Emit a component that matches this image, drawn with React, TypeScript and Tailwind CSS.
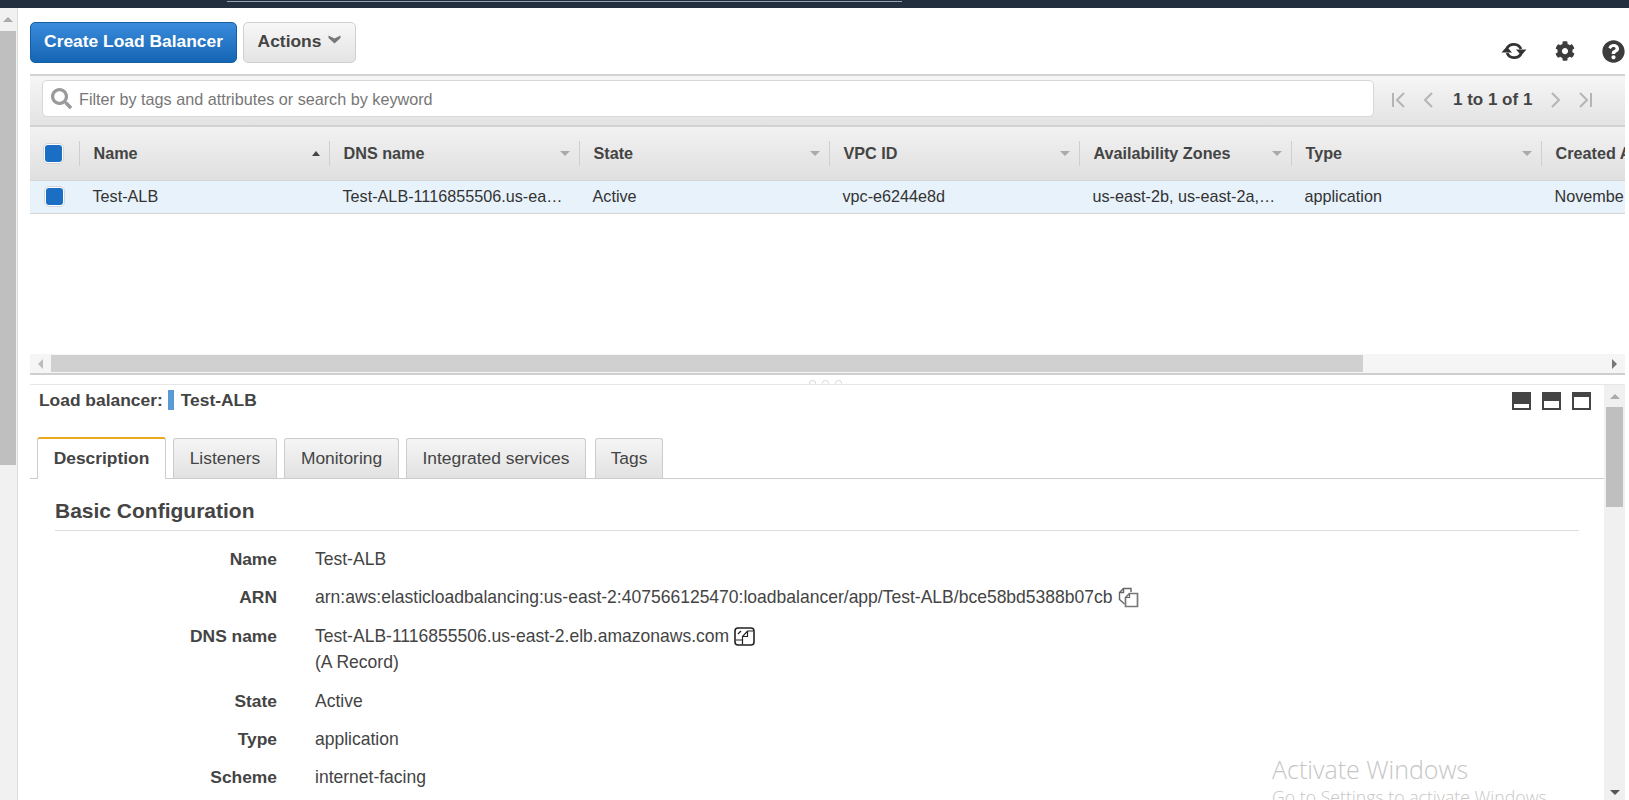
import React from "react";
import { FaCog, FaQuestionCircle, FaSearch } from "react-icons/fa";

const Checkbox = () => (
  <span className="flex h-[21px] w-[21px] items-center justify-center rounded-[5px] border border-[#d5d5d5] bg-white">
    <span className="h-[17px] w-[17px] rounded-[3px] bg-[#1a6fc4]" />
  </span>
);

const columns = [
  { name: "Name", width: "w-[250px]", value: "Test-ALB", sort: true },
  { name: "DNS name", width: "w-[250px]", value: "Test-ALB-1116855506.us-ea…" },
  { name: "State", width: "w-[250px]", value: "Active" },
  { name: "VPC ID", width: "w-[250px]", value: "vpc-e6244e8d" },
  { name: "Availability Zones", width: "w-[212px]", value: "us-east-2b, us-east-2a,…" },
  { name: "Type", width: "w-[250px]", value: "application" },
  { name: "Created A", width: "w-[83px]", value: "Novembe", last: true },
];

const HeaderCell = ({ col }: { col: (typeof columns)[number] }) => (
  <div className={`${col.width} flex h-full shrink-0 items-center py-[14px]`}>
    <div className={`flex h-full flex-1 items-center justify-between pl-[13.5px] pr-[9px] ${col.last ? "" : "border-r border-[#cfcfcf]"}`}>
      <span className="whitespace-nowrap">{col.name}</span>
      {!col.last &&
        (col.sort ? (
          <span className="h-0 w-0 border-x-[4px] border-b-[5px] border-x-transparent border-b-[#444]" />
        ) : (
          <span className="h-0 w-0 border-x-[5px] border-t-[5px] border-x-transparent border-t-[#aaa]" />
        ))}
    </div>
  </div>
);

const PanelIcon = ({ open }: { open: string }) => (
  <span className="flex h-[18px] w-[19px] items-end bg-[#444] px-[2px] pb-[2px]">
    <span className={`w-full bg-white ${open}`} />
  </span>
);

const Pager = ({ bar, flip }: { bar?: boolean; flip?: boolean }) => (
  <svg width="16" height="18" viewBox="0 0 16 18" fill="none" stroke="#b5b5b5" strokeWidth="2" className={flip ? "-scale-x-100" : ""}>
    {bar && <path d="M2 2v14" />}
    <path d={bar ? "M13 2L6 9l7 7" : "M12 2L5 9l7 7"} />
  </svg>
);

const CopyIcon = ({ dark }: { dark?: boolean }) =>
  dark ? (
    <svg width="21" height="19" viewBox="0 0 21 19" fill="none" stroke="#222" strokeWidth="1.6" className="ml-[5px]">
      <rect x="1" y="1" width="19" height="17" rx="3" />
      <path d="M4 7L7 4" strokeWidth="1.3" />
      <path d="M2 13H8.5V17.5" strokeWidth="1.2" />
      <path d="M8.5 13V9.5L13.5 4H19M8.5 9.5H13.5V4" strokeWidth="1.2" />
    </svg>
  ) : (
    <svg width="21" height="21" viewBox="0 0 21 21" fill="none" stroke="#666" strokeWidth="1.4" className="ml-[5px]">
      <path d="M13 5V1.5H5.5L1.5 5.5V12.5L6.5 17" />
      <path d="M5.5 1.5V5.5H1.5" />
      <path d="M11.5 6.5H19.5V19.5H7.5V10.5Z" strokeWidth="1.7" stroke="#777" />
      <path d="M11.5 6.5V10.5H7.5" strokeWidth="1.2" />
    </svg>
  );

const details = [
  { label: "Name", value: "Test-ALB" },
  { label: "ARN", value: "arn:aws:elasticloadbalancing:us-east-2:407566125470:loadbalancer/app/Test-ALB/bce58bd5388b07cb", copy: "light" },
  { label: "DNS name", value: "Test-ALB-1116855506.us-east-2.elb.amazonaws.com", copy: "dark", extra: "(A Record)" },
  { label: "State", value: "Active" },
  { label: "Type", value: "application" },
  { label: "Scheme", value: "internet-facing" },
];

const tabs = [
  { name: "Listeners", width: "w-[104px]" },
  { name: "Monitoring", width: "w-[115px]" },
  { name: "Integrated services", width: "w-[180px]" },
  { name: "Tags", width: "ml-[2px] w-[68px]" },
];

export default function App() {
  return (
    <div className="relative flex h-[800px] w-[1629px] flex-col overflow-hidden bg-white font-['Liberation_Sans',Arial,sans-serif] text-[17.4px] text-[#444]">
      <div className="relative h-[8px] shrink-0 bg-[#232f3e]">
        <div className="ml-[227px] h-[2px] w-[675px] border-b border-[#9aa3ad]" />
      </div>

      <div className="flex min-h-0 flex-1">
        {/* page scrollbar */}
        <div className="flex h-full w-[18px] shrink-0 flex-col border-r border-[#dcdcdc] bg-[#f1f1f1]">
          <div className="flex h-[23px] w-[16px] items-center justify-center">
            <span className="h-0 w-0 border-x-[5px] border-b-[5px] border-x-transparent border-b-[#aaa]" />
          </div>
          <div className="h-[434px] w-[16px] bg-[#bfbfbf]" />
        </div>

        <div className="flex min-w-0 flex-1 flex-col pl-[12px] pr-[4px]">
          {/* actions */}
          <div className="flex h-[66px] shrink-0 items-start justify-between pt-[14px]">
            <div className="flex gap-[6px]">
              <button className="h-[41px] w-[207px] rounded-[5px] border border-[#15609f] bg-gradient-to-b from-[#3a8bdc] to-[#1465b4] pb-[2px] font-bold text-white">
                Create Load Balancer
              </button>
              <button className="flex h-[41px] w-[113px] items-center justify-center gap-[7px] rounded-[5px] border border-[#cfcfcf] bg-gradient-to-b from-[#f7f7f7] to-[#e4e4e4] pb-[2px] font-bold">
                Actions
                <svg width="13" height="9" viewBox="0 0 13 9" fill="#777" className="mb-[4px]">
                  <path d="M0.5 0.5L6.5 3.5L12.5 0.5V3L6.5 8.5L0.5 3z" />
                </svg>
              </button>
            </div>
            <div className="mt-[17px] flex items-center text-[#3c3c3c]">
              <svg width="26" height="24" viewBox="0 0 26 24" fill="none" stroke="#333" strokeWidth="2.8" className="-ml-[1px]">
                <path d="M6 9a8 8 0 0 1 14 1" />
                <path d="M20 15a8 8 0 0 1-14-1" />
                <path d="M15 10.5h10.5l-5.25 6z" fill="#333" stroke="none" />
                <path d="M0.5 13.5h10.5l-5.25-6z" fill="#333" stroke="none" />
              </svg>
              <FaCog className="ml-[28px] text-[20px]" />
              <FaQuestionCircle className="ml-[27px] text-[23px]" />
            </div>
          </div>

          {/* filter bar */}
          <div className="flex h-[53px] shrink-0 items-center border-y-2 border-[#d2d2d2] bg-gradient-to-b from-[#f6f6f6] to-[#e3e3e3] pb-[4px] pl-[12px]">
            <div className="flex h-[37px] w-[1332px] items-center rounded-[5px] border border-[#d8d8d8] bg-white pl-[8px]">
              <FaSearch className="text-[21px] text-[#9a9a9a]" />
              <span className="ml-[7px] pt-[1px] text-[16.2px] text-[#777]">Filter by tags and attributes or search by keyword</span>
            </div>
            <div className="ml-[17px] mt-[2px] flex items-center">
              <Pager bar />
              <span className="ml-[13px]"><Pager /></span>
              <span className="ml-[17px] text-[17px] font-bold">1 to 1 of 1</span>
              <span className="ml-[16px]"><Pager flip /></span>
              <span className="ml-[13px]"><Pager bar flip /></span>
            </div>
          </div>

          {/* table */}
          <div className="flex h-[53px] shrink-0 items-center overflow-hidden bg-gradient-to-b from-[#f2f2f2] to-[#dfdfdf] text-[16.2px] font-bold">
            <div className="flex h-full w-[50px] shrink-0 items-center py-[14px]">
              <div className="flex h-full w-full items-center border-r border-[#cfcfcf] pl-[13px]">
                <Checkbox />
              </div>
            </div>
            {columns.map((col) => (
              <HeaderCell key={col.name} col={col} />
            ))}
          </div>
          <div className="flex h-[34px] shrink-0 items-center overflow-hidden border-y border-[#d5d5d5] bg-[#e8f2fb] pb-[1px] text-[16.2px] text-[#333]">
            <div className="flex w-[50px] shrink-0 pl-[14px]">
              <Checkbox />
            </div>
            {columns.map((col) => (
              <div key={col.name} className={`${col.width} shrink-0 overflow-hidden whitespace-nowrap pl-[12.5px]`}>
                {col.value}
              </div>
            ))}
          </div>

          <div className="h-[140px] shrink-0" />

          {/* table scrollbar */}
          <div className="flex h-[21px] shrink-0 items-center border-b-2 border-[#cfcfcf] bg-[#f5f5f5]">
            <div className="flex w-[21px] justify-center">
              <span className="h-0 w-0 border-y-[5px] border-r-[5px] border-y-transparent border-r-[#bbb]" />
            </div>
            <div className="h-[17px] w-[1312px] bg-[#d0d0d0]" />
            <div className="flex flex-1 justify-end pr-[8px]">
              <span className="h-0 w-0 border-y-[5px] border-l-[5px] border-y-transparent border-l-[#777]" />
            </div>
          </div>

          {/* splitter */}
          <div className="flex h-[9px] shrink-0 items-end justify-center gap-[6px] pr-[5px]">
            <span className="h-[4px] w-[7px] rounded-t-full border border-b-0 border-[#ddd]" />
            <span className="h-[4px] w-[7px] rounded-t-full border border-b-0 border-[#ddd]" />
            <span className="h-[4px] w-[7px] rounded-t-full border border-b-0 border-[#ddd]" />
          </div>

          {/* details panel */}
          <div className="flex min-h-0 flex-1 border-t border-[#e6e6e6]">
            <div className="min-w-0 flex-1">
              <div className="flex h-[52px] items-start justify-between pl-[9px] pr-[13px] pt-[5px]">
                <div className="flex h-[20px] items-center font-bold">
                  Load balancer:
                  <span className="ml-[5px] mr-[7px] h-[20px] w-[6px] bg-[#5a9bd5]" />
                  Test-ALB
                </div>
                <div className="mt-[2px] flex gap-[11px]">
                  <PanelIcon open="h-[4px]" />
                  <PanelIcon open="h-[7px]" />
                  <PanelIcon open="h-[11px]" />
                </div>
              </div>

              <div className="flex h-[42px] items-end border-b border-[#ccc] pl-[7px]">
                <div className="z-10 -mb-px flex h-[42px] w-[129px] items-center justify-center rounded-t-[3px] border border-b-0 border-[#ccc] border-t-[#eba91f] bg-white pb-[1px] font-bold [border-top-width:2px]">
                  Description
                </div>
                <div className="ml-[7px] flex gap-[7px]">
                  {tabs.map((tab) => (
                    <div
                      key={tab.name}
                      className={`${tab.width} flex h-[40px] items-center justify-center rounded-t-[3px] border border-b-0 border-[#ccc] bg-gradient-to-b from-[#f5f5f5] to-[#e2e2e2]`}
                    >
                      {tab.name}
                    </div>
                  ))}
                </div>
              </div>

              <div className="pl-[25px] pr-[25px] pt-[18px]">
                <h2 className="h-[34px] border-b border-[#ddd] text-[21px] font-bold leading-[28px]">Basic Configuration</h2>
                <div className="pt-[9px]">
                  {details.map((row) => (
                    <div key={row.label} className="flex py-[6px] leading-[26.4px]">
                      <div className="w-[222px] shrink-0 text-right font-bold">{row.label}</div>
                      <div className="ml-[38px] text-[17.52px]">
                        <div className="flex items-center">
                          {row.value}
                          {row.copy === "light" && <CopyIcon />}
                          {row.copy === "dark" && <CopyIcon dark />}
                        </div>
                        {row.extra && <div>{row.extra}</div>}
                      </div>
                    </div>
                  ))}
                </div>
              </div>
            </div>

            {/* panel scrollbar */}
            <div className="flex w-[21px] shrink-0 flex-col items-center justify-between bg-[#f0f0f0] pb-[5px]">
              <div className="flex w-full flex-col items-center">
                <div className="flex h-[22px] items-center">
                  <span className="h-0 w-0 border-x-[5px] border-b-[5px] border-x-transparent border-b-[#aaa]" />
                </div>
                <div className="h-[100px] w-[17px] bg-[#bfbfbf]" />
              </div>
              <span className="h-0 w-0 border-x-[5px] border-t-[5px] border-x-transparent border-t-[#555]" />
            </div>
          </div>
        </div>
      </div>

      {/* windows watermark */}
      <div className="absolute left-[1272px] top-[753px] whitespace-nowrap font-['Open_Sans',sans-serif] font-light text-[#c6c6c6]">
        <div className="text-[25px] leading-[32px]">Activate Windows</div>
        <div className="text-[17.7px] leading-[24px]">Go to Settings to activate Windows.</div>
      </div>
    </div>
  );
}
